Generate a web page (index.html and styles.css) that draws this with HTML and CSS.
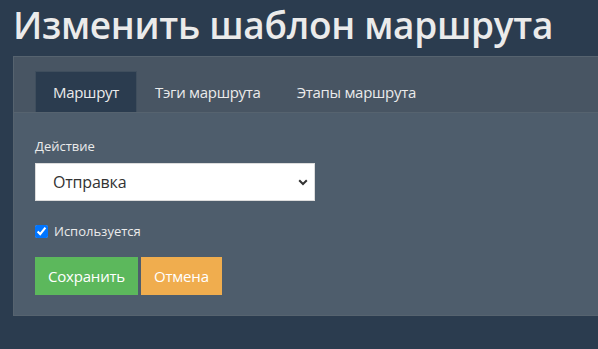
FILE: index.html
```html
<!DOCTYPE html>
<html lang="ru">
<head>
  <meta charset="UTF-8">
  <meta name="viewport" content="width=device-width, initial-scale=1.0">
  <title>Изменить шаблон маршрута</title>
  <link rel="stylesheet" href="styles.css">
</head>
<body>
  <div class="page">
    <h1>Изменить шаблон маршрута</h1>

    <div class="panel">
      <div class="panel-heading">
        <ul class="tabs">
          <li class="tab active">Маршрут</li>
          <li class="tab">Тэги маршрута</li>
          <li class="tab">Этапы маршрута</li>
        </ul>
      </div>

      <div class="panel-body">
        <label class="field-label" for="action">Действие</label>
        <div class="select-wrap">
          <select id="action" class="form-select">
            <option>Отправка</option>
            <option>Получение</option>
          </select>
          <svg class="select-arrow" width="10" height="7" viewBox="0 0 10 7">
            <path d="M1.2 1.2 L5 5 L8.8 1.2" fill="none" stroke="#333" stroke-width="2"/>
          </svg>
        </div>

        <label class="check">
          <input type="checkbox" checked>
          <span>Используется</span>
        </label>

        <div class="actions">
          <button class="btn btn-save">Сохранить</button>
          <button class="btn btn-cancel">Отмена</button>
        </div>
      </div>
    </div>
  </div>
</body>
</html>
```

FILE: styles.css
```css
:root {
  --fundo: #2b3c4f;
  --painel: #4e5d6c;
  --painel-topo: #485563;
  --borda: #56636f;
  --texto: #ebebeb;
  --verde: #5cb85c;
  --laranja: #f0ad4e;
}

html, body {
  margin: 0;
  height: 100%;
}

body {
  background-color: var(--fundo);
  color: var(--texto);
  font-family: 'Open Sans', 'Noto Sans', sans-serif;
  overflow: hidden;
}

.page {
  padding-left: 13px;
}

h1 {
  margin: 3px 0 10px 0;
  font-size: 37px;
  line-height: 43px;
  font-weight: 600;
  color: #ebebeb;
  letter-spacing: -0.3px;
  white-space: nowrap;
}

.panel {
  background-color: var(--painel);
  border: 1px solid var(--borda);
  border-right: none;
}

.panel-heading {
  background-color: var(--painel-topo);
  padding: 14px 21px 0;
  border-bottom: 1px solid #56636f;
}

.tabs {
  display: flex;
  list-style: none;
  margin: 0;
  padding: 0;
}

.tab {
  padding: 0 17px;
  height: 40px;
  line-height: 40px;
  font-size: 15px;
  letter-spacing: -0.3px;
  border: 1px solid transparent;
  border-bottom: none;
  color: #ebebeb;
}

.tab.active {
  background-color: var(--fundo);
  border-color: #3f4e5d;
}

.panel-body {
  padding: 23px 21px 20px;
}

.field-label {
  display: block;
  font-size: 13px;
  line-height: 20px;
  margin-bottom: 7px;
}

.select-wrap {
  position: relative;
  width: 280px;
}

.form-select {
  display: block;
  width: 100%;
  height: 38px;
  padding: 0 17px;
  border: 1px solid #dcdcdc;
  border-radius: 0;
  background-color: #ffffff;
  color: #333333;
  font-family: inherit;
  font-size: 16px;
  letter-spacing: -0.2px;
  appearance: none;
  -webkit-appearance: none;
  outline: none;
}

.select-arrow {
  position: absolute;
  right: 7px;
  top: 16px;
  pointer-events: none;
}

.check {
  display: flex;
  align-items: center;
  gap: 6px;
  margin-top: 20px;
  font-size: 13px;
  line-height: 20px;
}

.check input {
  width: 13px;
  height: 13px;
  margin: 0;
  accent-color: #0075ff;
}

.actions {
  display: flex;
  gap: 3px;
  margin-top: 16px;
}

.btn {
  height: 38px;
  padding: 0 13px;
  border: none;
  border-radius: 0;
  color: #ffffff;
  font-family: inherit;
  font-size: 15px;
  letter-spacing: -0.2px;
  cursor: pointer;
}

.btn-save {
  background-color: var(--verde);
}

.btn-cancel {
  background-color: var(--laranja);
}
```
